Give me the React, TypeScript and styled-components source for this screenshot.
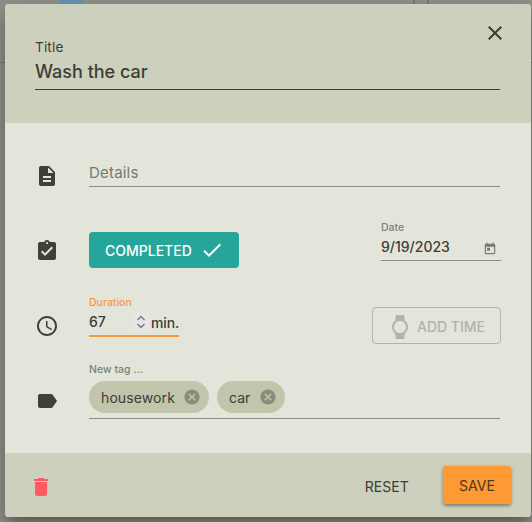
import React from "react";
import styled, { createGlobalStyle } from "styled-components";
import {
  MdAssignmentTurnedIn,
  MdCancel,
  MdCheck,
  MdClose,
  MdDelete,
  MdDescription,
  MdLabel,
  MdSchedule,
  MdToday,
  MdWatch,
} from "react-icons/md";

const GlobalStyle = createGlobalStyle`
  *, *::before, *::after { box-sizing: border-box; }
  body {
    margin: 0;
    overflow: hidden;
    font-family: Inter, "Liberation Sans", sans-serif;
    color: #3b3d36;
  }
  svg { display: block; flex: none; }
  button { font: inherit; color: inherit; background: none; border: 0; padding: 0; margin: 0; }
`;

const Backdrop = styled.div`
  position: relative;
  width: 532px;
  height: 522px;
  padding: 4px 1px 5px 5px;
  background: #8f9089;
  overflow: hidden;
`;

const Behind = styled.div<{ $x: number; $y: number; $w: number; $h: number; $color: string }>`
  position: absolute;
  left: ${(p) => p.$x}px;
  top: ${(p) => p.$y}px;
  width: ${(p) => p.$w}px;
  height: ${(p) => p.$h}px;
  background: ${(p) => p.$color};
`;

const BlueDot = styled(Behind)`
  border-radius: 0 0 14px 14px;
`;

const Dialog = styled.section`
  position: relative;
  display: flex;
  flex-direction: column;
  height: 513px;
  border-radius: 4px;
  overflow: hidden;
  background: #e3e5da;
  box-shadow: 0 8px 12px -5px rgba(0, 0, 0, 0.3), 0 10px 24px 2px rgba(0, 0, 0, 0.22);
`;

const Header = styled.header`
  position: relative;
  height: 119px;
  padding: 34px 31px 0 30px;
  background: #cdd0bc;
`;

const CloseButton = styled.button`
  position: absolute;
  top: 17px;
  right: 24px;
`;

const TitleField = styled.div`
  height: 52px;
  border-bottom: 1px solid #3d3f36;
`;

const TitleLabel = styled.div`
  font-size: 13.6px;
  line-height: 18px;
  letter-spacing: 0.15px;
`;

const TitleValue = styled.div`
  margin-top: 5px;
  font-size: 18px;
  font-weight: 500;
  line-height: 22px;
`;

const Body = styled.main`
  height: 330px;
  padding: 16px 31px 0 30px;
`;

const Row = styled.div`
  display: flex;
  height: 75px;
`;

const RowIcon = styled.div`
  width: 54px;
  padding-top: 25px;
  flex: none;
  color: #3f3f3b;
`;

const Field = styled.div<{ $width?: number; $height: number; $active?: boolean }>`
  width: ${(p) => (p.$width ? `${p.$width}px` : "100%")};
  height: ${(p) => p.$height}px;
  border-bottom: ${(p) => (p.$active ? "2px solid #f79a3a" : "1px solid #8d8f87")};
`;

const DateField = styled(Field)`
  margin: 0 -1px 0 auto;
`;

const FieldLabel = styled.div<{ $active?: boolean; $top: number }>`
  padding-top: ${(p) => p.$top}px;
  font-size: 10.5px;
  font-weight: 500;
  line-height: 12px;
  color: ${(p) => (p.$active ? "#f39a42" : "#7e8078")};
`;

const Placeholder = styled.div`
  padding-top: 24px;
  font-size: 15px;
  line-height: 20px;
  letter-spacing: 0.2px;
  color: #777971;
`;

const FieldValue = styled.div<{ $top: number }>`
  display: flex;
  align-items: center;
  height: 20px;
  margin-top: ${(p) => p.$top}px;
  font-size: 14px;
  font-weight: 500;
  line-height: 20px;
`;

const CalendarIcon = styled.span`
  margin: 3px 4px 0 auto;
  color: #777971;
`;

const Stepper = styled.span`
  display: grid;
  place-items: center;
  width: 17px;
  height: 17px;
  margin: 0 1px 0 auto;
  background: #e6e6e8;
`;

const Unit = styled.span`
  padding-top: 2px;
  font-size: 14px;
  letter-spacing: -0.15px;
`;

const CompletedButton = styled.button`
  display: flex;
  align-items: center;
  gap: 8px;
  width: 150px;
  height: 36px;
  margin-top: 18px;
  padding-left: 16px;
  border-radius: 4px;
  background: #26a69a;
  color: #fff;
  font-size: 14px;
  font-weight: 500;
`;

const AddTimeButton = styled.button`
  display: flex;
  align-items: center;
  gap: 5px;
  width: 129px;
  height: 37px;
  margin: 18px -1px 0 auto;
  padding: 2px 0 0 15px;
  border: 1px solid #b2b4aa;
  border-radius: 4px;
  color: #b2b4aa;
  font-size: 14px;
  font-weight: 500;
`;

const Chips = styled.div`
  display: flex;
  gap: 8px;
  margin-top: 5px;
`;

const Chip = styled.span`
  display: flex;
  align-items: center;
  gap: 8px;
  height: 32px;
  padding: 1px 8px 0 12px;
  border-radius: 16px;
  background: #c1c5ac;
  font-size: 14px;
  letter-spacing: 0.1px;

  svg { margin-top: -1px; color: #898c7c; }
`;

const Footer = styled.footer`
  display: flex;
  align-items: center;
  height: 64px;
  padding: 0 20px 0 24px;
  background: #cdd0bc;
  font-size: 14px;
`;

const DeleteButton = styled.button`
  margin: 4px auto 0 0;
  color: #ff5a63;
`;

const ResetButton = styled.button`
  margin: 2px 34px 0 0;
  letter-spacing: 0.1px;
`;

const SaveButton = styled.button`
  width: 68px;
  height: 38px;
  border-radius: 3px;
  background: #ff9933;
  color: #4b371f;
  box-shadow: 0 2px 3px rgba(0, 0, 0, 0.3), 0 1px 5px rgba(0, 0, 0, 0.15);
`;

export default function App() {
  return (
    <>
      <GlobalStyle />
      <Backdrop>
        <Behind $x={0} $y={62} $w={532} $h={1} $color="#74756e" />
        <Behind $x={413} $y={0} $w={2} $h={4} $color="#777871" />
        <Behind $x={427} $y={0} $w={2} $h={4} $color="#777871" />
        <BlueDot $x={56} $y={-12} $w={30} $h={18} $color="#6594b5" />
        <Dialog role="dialog" aria-label="Edit task">
          <Header>
            <CloseButton aria-label="Close"><MdClose size={24} /></CloseButton>
            <TitleField>
              <TitleLabel>Title</TitleLabel>
              <TitleValue>Wash the car</TitleValue>
            </TitleField>
          </Header>
          <Body>
            <Row>
              <RowIcon><MdDescription size={24} /></RowIcon>
              <Field $height={48}><Placeholder>Details</Placeholder></Field>
            </Row>
            <Row>
              <RowIcon><MdAssignmentTurnedIn size={24} /></RowIcon>
              <CompletedButton>COMPLETED<MdCheck size={24} /></CompletedButton>
              <DateField $width={120} $height={47}>
                <FieldLabel $top={8}>Date</FieldLabel>
                <FieldValue $top={3}>
                  9/19/2023
                  <CalendarIcon><MdToday size={14} /></CalendarIcon>
                </FieldValue>
              </DateField>
            </Row>
            <Row>
              <RowIcon><MdSchedule size={24} /></RowIcon>
              <Field $width={90} $height={48} $active>
                <FieldLabel $top={8} $active>Duration</FieldLabel>
                <FieldValue $top={3}>
                  67
                  <Stepper>
                    <svg width="10" height="14" viewBox="0 0 10 14" fill="none" stroke="#74767a" strokeWidth="1.3">
                      <path d="M1.5 5 5 1.5 8.5 5M1.5 9 5 12.5 8.5 9" />
                    </svg>
                  </Stepper>
                  <Unit>min.</Unit>
                </FieldValue>
              </Field>
              <AddTimeButton disabled><MdWatch size={24} />ADD TIME</AddTimeButton>
            </Row>
            <Row>
              <RowIcon><MdLabel size={24} /></RowIcon>
              <Field $height={55}>
                <FieldLabel $top={0}>New tag ...</FieldLabel>
                <Chips>
                  <Chip>housework<MdCancel size={18} /></Chip>
                  <Chip>car<MdCancel size={18} /></Chip>
                </Chips>
              </Field>
            </Row>
          </Body>
          <Footer>
            <DeleteButton aria-label="Delete"><MdDelete size={24} /></DeleteButton>
            <ResetButton>RESET</ResetButton>
            <SaveButton>SAVE</SaveButton>
          </Footer>
        </Dialog>
      </Backdrop>
    </>
  );
}
